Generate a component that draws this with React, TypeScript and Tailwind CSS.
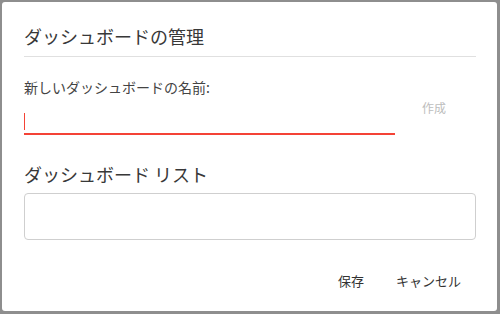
export default function App() {
  return (
    <div className="h-[314px] w-[500px] bg-[#8e8e8e] pt-[2px] pl-[2px] pr-[3px] pb-[3px] font-['Noto_Sans_CJK_JP','Noto_Sans',sans-serif]">
      <div className="flex h-full flex-col rounded-[3px] bg-white pl-[22px] pr-[21px]">
        {/* Header */}
        <div className="border-b border-[#e0e0e0] pt-[22px] pb-[8px]">
          <h2 className="text-[18px] leading-[24px] text-[#383838]">ダッシュボードの管理</h2>
        </div>

        {/* New dashboard */}
        <label className="mt-[20px] text-[14px] leading-[20px] text-[#444]">新しいダッシュボードの名前:</label>
        <div className="flex items-start">
          <div className="mt-[10px] flex h-[28px] w-[371px] items-start border-b-2 border-[#f44336] pt-[6px]">
            <span className="h-[17px] w-px bg-[#f44336]" />
          </div>
          <button className="ml-[27px] mt-[1px] text-[12px] leading-[20px] text-[#bdbdbd]">作成</button>
        </div>

        {/* List */}
        <h3 className="mt-[27px] text-[18px] leading-[24px] text-[#383838]">ダッシュボード リスト</h3>
        <div className="mt-[7px] h-[47px] rounded-[4px] border border-[#cfcfcf]" />

        {/* Footer */}
        <div className="mt-[31px] flex justify-end">
          <button className="px-4 text-[13px] leading-[20px] text-[#333]">保存</button>
          <button className="pl-4 pr-[15px] text-[13px] leading-[20px] text-[#333]">キャンセル</button>
        </div>
      </div>
    </div>
  );
}
